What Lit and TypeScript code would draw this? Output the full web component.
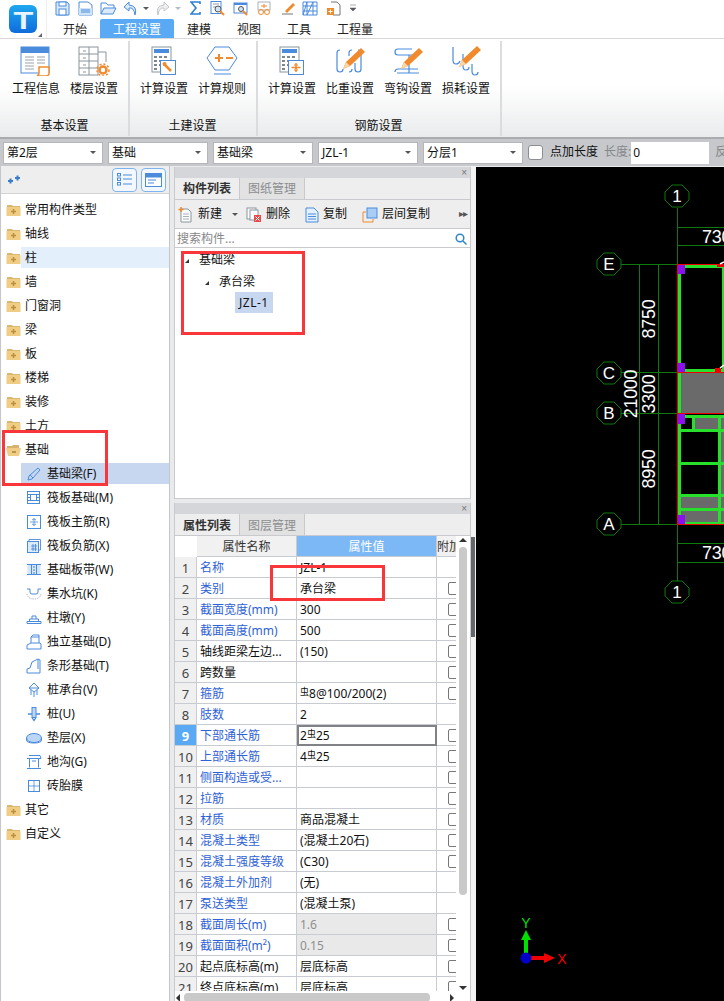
import { LitElement, html, svg, css } from 'lit';
import { customElement } from 'lit/decorators.js';

const BLUE = '#4a8bdc';
const ORANGE = '#f08a2c';

const pencil = (x = 0, y = 0) => svg`
  <g transform="translate(${x} ${y})">
    <path d="M2 24 L5 17 L20 3 L24 7 L9 21 Z" fill="${ORANGE}"/>
    <path d="M2 24 L5 17 L9 21 Z" fill="#f7d6a8"/>
  </g>`;

const calc = (inner: unknown) => html`
  <svg width="26" height="30" viewBox="0 0 26 30">
    <rect x="1" y="1" width="19" height="25" fill="#fff" stroke="#8a949e"/>
    <rect x="3" y="3" width="15" height="4" fill="${BLUE}"/>
    <path d="M3 10h3v2H3zM8 10h3v2H8zM13 10h3v2h-3zM3 14h3v2H3zM8 14h3v2H8zM3 18h3v2H3zM8 18h3v2H8zM3 22h3v2H3z" fill="#7d8791"/>
    <rect x="9.500" y="14.500" width="15" height="14" fill="#fff" stroke="${BLUE}"/>
    ${inner}
  </svg>`;

const ribbonIcons: Record<string, unknown> = {
  info: html`<svg width="32" height="30" viewBox="0 0 32 30">
    <rect x="1" y="1" width="28" height="26" fill="#fff" stroke="${BLUE}"/>
    <rect x="1" y="1" width="28" height="6" fill="${BLUE}"/>
    <path d="M5 11h9M5 14h9M5 17h9M5 20h9M5 23h9M17 11h8M17 14h8M17 17h8" stroke="#9aa3ab"/>
    <path d="M19 21h10v7q-1 2-3 2h-9q2-1 2-3z" fill="#fff" stroke="${ORANGE}" stroke-width="1.500"/>
  </svg>`,
  floor: html`<svg width="32" height="30" viewBox="0 0 32 30">
    <rect x="1" y="1" width="19" height="28" fill="#fff" stroke="#8a949e"/>
    <path d="M1 8h19M1 15h19M1 22h19M11 1v28M20 6h8v10" fill="none" stroke="#8a949e"/>
    <path d="M5 5h3M5 12h3M5 19h3M5 26h3" stroke="#8a949e"/>
    <circle cx="25" cy="24" r="3.500" fill="#fff" stroke="${ORANGE}" stroke-width="2.500"/>
    <circle cx="25" cy="24" r="6" fill="none" stroke="${ORANGE}" stroke-width="1.500" stroke-dasharray="2 2"/>
  </svg>`,
  calcWrench: calc(svg`<path d="M13 18l7 7" stroke="${ORANGE}" stroke-width="2.500"/><circle cx="13.500" cy="18" r="2" fill="${ORANGE}"/>`),
  calcCross: calc(svg`<path d="M17 17v9M12.500 21.500h9" stroke="${ORANGE}" stroke-width="1.500"/><path d="M15 19h4M15 24h4" stroke="${ORANGE}"/>`),
  rule: html`<svg width="32" height="30" viewBox="0 0 32 30">
    <path d="M9 1h14l8 11-8 12H9L1 12z" fill="#fff" stroke="${BLUE}"/>
    <path d="M9 12h8M13 8v8M20 12h7" stroke="${ORANGE}" stroke-width="2"/>
    <path d="M8 28h17" stroke="${BLUE}"/>
  </svg>`,
  density: html`<svg width="32" height="30" viewBox="0 0 32 30">
    <path d="M6 4q-3 0-3 3v16q0 3 3 3t3-3M15 26q3 0 3-3M18 4q-3 0-3 3v3M24 4q3 0 3 3v16q0 3-3 3t-3-3V17" fill="none" stroke="${BLUE}" stroke-width="1.200"/>
    ${pencil(7, -1)}
  </svg>`,
  hook: html`<svg width="32" height="30" viewBox="0 0 32 30">
    <path d="M20 3H6q-3 0-3 3t3 3M6 9h20M3 26q0-3 3-3h20M5 27h22M17 9v18" fill="none" stroke="${BLUE}" stroke-width="1.200"/>
    ${pencil(7, -1)}
  </svg>`,
  loss: html`<svg width="32" height="30" viewBox="0 0 32 30">
    <path d="M3 1v13q0 4 3 4t4-3M13 8v12q0 4 3 4t3-3M22 18v7q0 4 3 4t3-3" fill="none" stroke="${BLUE}" stroke-width="1.200"/>
    ${pencil(7, -3)}
  </svg>`,
};

const ribbonGroups = [
  { title: '基本设置', width: 130, pad: 7, items: [['工程信息', 'info'], ['楼层设置', 'floor']] },
  { title: '土建设置', width: 128, pad: 5, items: [['计算设置', 'calcWrench'], ['计算规则', 'rule']] },
  { title: '钢筋设置', width: 244, pad: 5, items: [['计算设置', 'calcCross'], ['比重设置', 'density'], ['弯钩设置', 'hook'], ['损耗设置', 'loss']] },
];

const qa = (w: number, gap: number, body: unknown) =>
  html`<svg style="margin-right:${gap}px" width="${w}" height="15" viewBox="0 0 ${w} 15">${body}</svg>`;

const quickIcons = [
  qa(15, 8, svg`<path d="M1 1h11l2 2v11H1z" fill="#dcebfa" stroke="${BLUE}"/><rect x="4" y="1" width="7" height="4" fill="#fff" stroke="${BLUE}"/><rect x="4" y="8" width="7" height="6" fill="#fff" stroke="${BLUE}"/>`),
  qa(15, 7, svg`<path d="M1 1h9l4 3v10H1z" fill="#fff" stroke="${BLUE}"/><path d="M1 7h13v7H1z" fill="#cfe3f8"/><path d="M3 9h9M3 11h9" stroke="${BLUE}"/>`),
  qa(17, 6, svg`<path d="M1 13V2h5l2 2h6v3" fill="none" stroke="${BLUE}"/><path d="M1 13l3-6h12l-3 6z" fill="#dcebfa" stroke="${BLUE}"/>`),
  qa(15, 4, svg`<path d="M6 1L1 6l5 4V7q5-1 6 7 3-9-6-10z" fill="#dcebfa" stroke="${BLUE}"/>`),
  qa(7, 6, svg`<path d="M1 6h6l-3 3z" fill="#55595e"/>`),
  qa(15, 4, svg`<path d="M9 1l5 5-5 4V7q-5-1-6 7-3-9 6-10z" fill="#f0f0f0" stroke="#c2c6ca"/>`),
  qa(7, 9, svg`<path d="M1 6h6l-3 3z" fill="#b8bcc0"/>`),
  qa(11, 9, svg`<path d="M10 3V1H1l5 6-5 6h9v-2" fill="none" stroke="#2f7fd0" stroke-width="1.600"/>`),
  qa(15, 8, svg`<rect x="1" y="0.500" width="10" height="12" fill="#fff" stroke="${BLUE}"/><path d="M3 3h6M3 6h4" stroke="#99a"/><circle cx="8" cy="8" r="3" fill="#cfe3f8" stroke="#555"/><path d="M10 10l4 4" stroke="${ORANGE}" stroke-width="2"/>`),
  qa(16, 8, svg`<rect x="1" y="2" width="13" height="10" fill="#fff" stroke="${BLUE}"/><rect x="1" y="2" width="13" height="2" fill="${BLUE}"/><circle cx="8" cy="8" r="2.500" fill="#cfe3f8" stroke="#555"/><path d="M10 10l4 4" stroke="${ORANGE}" stroke-width="2"/>`),
  qa(15, 9, svg`<rect x="1" y="1" width="12" height="8" fill="#fff" stroke="#a9b3bd"/><path d="M4 5h6M7 3v4" stroke="${ORANGE}"/><circle cx="4" cy="11" r="2.500" fill="none" stroke="${ORANGE}"/><circle cx="10" cy="11" r="2.500" fill="none" stroke="${ORANGE}"/>`),
  qa(15, 6, svg`<path d="M4 10L12 2l2 2-8 8z" fill="${ORANGE}"/><path d="M1 13h11" stroke="#777"/>`),
  qa(16, 8, svg`<path d="M1 1h14v13H1zM1 5h14M1 10h14M5 1v13M11 1v13M1 14L5 1M5 14L11 1" fill="none" stroke="${BLUE}"/>`),
  qa(15, 8, svg`<path d="M5 1h6l3 3v10H7" fill="#fff" stroke="#777"/><rect x="1" y="7" width="7" height="7" fill="${ORANGE}"/><path d="M2.500 10.500h4M4.500 8.500v4" stroke="#fff"/>`),
  qa(7, 0, svg`<path d="M1 4h6M1 7h6l-3 3z" fill="#55595e" stroke="#55595e" stroke-width="0.500"/>`),
];

const folder = (open = false) => html`<svg class="folder" width="15" height="12" viewBox="0 0 15 12">
  ${open
    ? svg`<path d="M1 2h5l1-1h6v3H1z" fill="#d8b26c"/><path d="M0 4h12l3 0-2 8H2z" fill="#f0cd85"/><path d="M6 8h4" stroke="#a9823c" stroke-width="1.500"/>`
    : svg`<path d="M1 1h5l1 1h7v2H1z" fill="#dcb772"/><rect x="0.500" y="3" width="14" height="9" fill="#f0cd85"/><path d="M5 7.500h5M7.500 5v5" stroke="#bd8f3c" stroke-width="1.500"/>`}
</svg>`;

const leaf = (body: unknown) => html`<svg width="16" height="16" viewBox="0 0 16 16" fill="none" stroke="${BLUE}">${body}</svg>`;

const leafIcons: Record<string, unknown> = {
  pen: leaf(svg`<path d="M2 14l1-4 9-8 2 2-8 9z"/><path d="M4 9l3 3"/>`),
  raft: leaf(svg`<rect x="1.500" y="1.500" width="12" height="12"/><rect x="4.500" y="4.500" width="6" height="6"/><path d="M1.500 4.500h3M1.500 7.500h3M1.500 10.500h3M10.500 4.500h3M10.500 7.500h3M10.500 10.500h3"/>`),
  raftMain: leaf(svg`<rect x="1.500" y="1.500" width="13" height="13"/><path d="M8 4v8M4 8h8M6 6q2-2 4 0M6 10q2 2 4 0" stroke-width="0.800"/>`),
  raftNeg: leaf(svg`<rect x="1.500" y="3.500" width="11" height="11" fill="#dcebfa"/><path d="M3 3V1.500h11.500V12H13M5 8h6M5 11h6M7 6v7M9.500 6v7" stroke-width="0.900"/>`),
  strip: leaf(svg`<rect x="1.500" y="2.500" width="13" height="10" fill="#d4e5f8" stroke="none"/><path d="M1 2.500h14M1 12.500h14M5.500 2.500v10M10.500 2.500v10"/><path d="M8 4v8" stroke-dasharray="2 1"/>`),
  pit: leaf(svg`<path d="M1 3h3v3q0 2 2 2h4q2 0 2-2V3h3"/><path d="M1 8q1 5 7 5t7-5" stroke="#9aa8b6" stroke-dasharray="1 1"/>`),
  pier: leaf(svg`<path d="M1 11.500h14v2H1zM3.500 11V9h9v2M6 9V6h4v3"/>`),
  iso: leaf(svg`<path d="M1 15v-4l4-2h9l1 1v5zM5 9V3l2-2h6v8M5 3h8"/>`),
  bar: leaf(svg`<path d="M1 15v-4l3-1 2-6 6-3 2 1v13zM12 1v10"/>`),
  cap: leaf(svg`<path d="M8 1l5 5-5 4-5-4zM5 8v5M8 10v5M11 8v5M3 6h10"/>`),
  pile: leaf(svg`<rect x="6" y="1.500" width="4" height="10" fill="#bcd6f5"/><path d="M2 8h4M10 8h4M6 11.500l2 3 2-3" stroke-width="1.300"/>`),
  cushion: html`<svg width="16" height="16" viewBox="0 0 16 16"><ellipse cx="8" cy="8" rx="7.500" ry="4.500" fill="#bcd6f5" stroke="${BLUE}"/><path d="M.5 8v2q0 3 7.500 3t7.500-3V8" fill="none" stroke="${BLUE}"/></svg>`,
  ditch: leaf(svg`<path d="M1 4.500h14M3 1.500h11L15 4.500M3.500 4.500v9M12.500 4.500v9M1 14.500h14M6 7h4"/>`),
  mold: leaf(svg`<rect x="2.500" y="2.500" width="11" height="11"/><path d="M8 2.500v11M2.500 8h11" stroke-width="0.800"/>`),
};

const treeBefore = ['常用构件类型', '轴线', '柱', '墙', '门窗洞', '梁', '板', '楼梯', '装修', '土方'];
const leaves = [
  ['基础梁(F)', 'pen'], ['筏板基础(M)', 'raft'], ['筏板主筋(R)', 'raftMain'], ['筏板负筋(X)', 'raftNeg'],
  ['基础板带(W)', 'strip'], ['集水坑(K)', 'pit'], ['柱墩(Y)', 'pier'], ['独立基础(D)', 'iso'],
  ['条形基础(T)', 'bar'], ['桩承台(V)', 'cap'], ['桩(U)', 'pile'], ['垫层(X)', 'cushion'],
  ['地沟(G)', 'ditch'], ['砖胎膜', 'mold'],
];

// name, value, blue name, checkbox
const rows: [string, string, boolean, boolean][] = [
  ['名称', 'JZL-1', true, false],
  ['类别', '承台梁', true, true],
  ['截面宽度(mm)', '300', true, true],
  ['截面高度(mm)', '500', true, true],
  ['轴线距梁左边...', '(150)', false, true],
  ['跨数量', '', false, true],
  ['箍筋', '~8@100/200(2)', true, true],
  ['肢数', '2', true, false],
  ['下部通长筋', '2~25', true, true],
  ['上部通长筋', '4~25', true, true],
  ['侧面构造或受...', '', true, true],
  ['拉筋', '', true, true],
  ['材质', '商品混凝土', true, true],
  ['混凝土类型', '(混凝土20石)', true, true],
  ['混凝土强度等级', '(C30)', true, true],
  ['混凝土外加剂', '(无)', true, false],
  ['泵送类型', '(混凝土泵)', true, false],
  ['截面周长(m)', '1.6', true, true],
  ['截面面积(m²)', '0.15', true, true],
  ['起点底标高(m)', '层底标高', false, true],
  ['终点底标高(m)', '层底标高', false, true],
];

const axisBubble = (cx: number, cy: number, label: string) => svg`
  <path d="M${cx - 5} ${cy - 11}h10l7 7v8l-7 7h-10l-7-7v-8z" fill="none" stroke="#0c7a0c" stroke-linejoin="round"/>
  <text x="${cx}" y="${cy + 6}" class="cad-label" text-anchor="middle">${label}</text>`;

const dimV = (x: number, y: number, label: string) => svg`
  <text transform="translate(${x} ${y}) rotate(-90)" class="cad-dim" text-anchor="middle">${label}</text>`;

@customElement('app-root')
export class AppRoot extends LitElement {
  static styles = css`
    :host {
      display: block; position: relative; width: 724px; height: 1001px; overflow: hidden;
      background: #fff; color: #111;
      font: 12px/1.2 "Noto Sans", "Noto Sans CJK SC", sans-serif;
    }
    svg { display: block; flex: none; }

    .topbar { display: flex; height: 38px; background: #fff; }
    .logo { width: 46px; padding: 5px 0 0 9px; box-sizing: border-box; position: relative; }
    .logo-mark {
      width: 28px; height: 28px; border-radius: 6px;
      background: linear-gradient(#1fa8f0, #0f6cdc);
      display: flex; align-items: center; justify-content: center;
      color: #e8f5ff; font: bold 24px/28px "Liberation Sans", sans-serif;
    }
    .logo-mark span { display: block; transform: scaleX(1.35); padding-top: 3px; }
    .grip {
      position: absolute; left: 38px; top: 33px; width: 0; height: 0;
      border-left: 4px solid transparent; border-bottom: 4px solid #666;
    }
    .head-main { flex: 1; display: flex; flex-direction: column; border-left: 1px solid #eee; }
    .quick { height: 19px; display: flex; align-items: flex-start; padding: 1px 0 0 8px; }
    .tabs { display: flex; height: 19px; padding-left: 3px; }
    .tab { padding: 0 13px; line-height: 21px; font-size: 12px; color: #222; }
    .tab.active { background: #5aa9f4; color: #fff; border-radius: 2px 2px 0 0; }

    .ribbon {
      display: flex; height: 99px; box-sizing: border-box;
      border-top: 1px solid #d8d8d8;
      background: linear-gradient(#fff 0, #fff 48%, #e9ebec 100%);
    }
    .group {
      display: flex; flex-direction: column; align-items: stretch; box-sizing: border-box;
      border-right: 2px solid #dadcde; margin: 2px 0 1px;
    }
    .group-items { display: flex; flex: 1; }
    .rb { width: 58px; display: flex; flex-direction: column; align-items: center; padding-top: 5px; }
    .rb .ic { height: 35px; }
    .rb span { line-height: 16px; white-space: nowrap; }
    .group-title { text-align: center; line-height: 18px; padding-bottom: 1px; padding-right: 6px; }

    .bar {
      display: flex; align-items: center; height: 29px; box-sizing: border-box;
      background: #c6c8cb; border-top: 2px solid #a9abae; padding-left: 3px;
    }
    .sel {
      flex: none; width: 100px; height: 22px; box-sizing: border-box; margin-right: 5px;
      background: #fff; border: 1px solid #b4b6b9; padding: 0 3px; line-height: 20px;
      display: flex; justify-content: space-between; align-items: center;
    }
    .caret { width: 0; height: 0; border: 3px solid transparent; border-top: 3px solid #555; border-bottom: 0; margin-right: 3px; flex: none; }
    .chk { width: 13px; height: 13px; border: 1px solid #8b8d90; border-radius: 3px; background: #fff; margin: 0 7px 0 0; flex: none; }
    .muted { color: #85878a; white-space: nowrap; }
    .len { width: 78px; height: 22px; background: #fff; box-sizing: border-box; padding-left: 2px; line-height: 22px; margin: 0 6px 0 0; flex: none; }
    .bar-label { margin-right: 6px; white-space: nowrap; }

    .main { display: flex; height: 836px; background: #e9eaec; }
    .side { width: 170px; flex: none; background: #fff; border-left: 1px solid #c4c6c9; border-right: 1px solid #c4c6c9; box-sizing: border-box; }
    .side-head { height: 28px; background: #eeeeee; border-bottom: 1px solid #d4d4d4; display: flex; align-items: center; padding: 0 3px 0 7px; gap: 4px; box-sizing: border-box; }
    .side-btn { width: 25px; height: 24px; border: 1px solid #7db4ee; border-radius: 4px; background: #f3f8fe; box-sizing: border-box; display: flex; align-items: center; justify-content: center; }
    .spacer { flex: 1; }
    .tree { padding-top: 4px; }
    .node { display: flex; align-items: center; height: 24px; padding-left: 5px; position: relative; }
    .node .name { margin-left: 4px; }
    .node.hl::before, .node.sel-row::before {
      content: ''; position: absolute; left: 20px; right: 0; top: 1px; bottom: 2px; z-index: 0;
    }
    .node.hl::before { background: #e3f0fc; }
    .node.sel-row::before { background: #c7d7ef; }
    .node > * { position: relative; }
    .node.leaf { padding-left: 25px; }
    .node.leaf .name { margin-left: 5px; }

    .mid { width: 297px; flex: none; margin-left: 4px; display: flex; flex-direction: column; gap: 4px; padding-top: 1px; box-sizing: border-box; }
    .panel { background: #fff; display: flex; flex-direction: column; position: relative; overflow: hidden; border-right: 1px solid #c8cacd; border-left: 1px solid #c8cacd; }
    .panel.top { height: 332px; flex: none; border-bottom: 1px solid #c8cacd; box-sizing: border-box; }
    .panel.bottom { flex: 1; }
    .cap { height: 11px; background: #d4d6da; flex: none; text-align: right; padding-right: 3px; font: 10px/11px "Liberation Sans", sans-serif; color: #777; }
    .ptabs { display: flex; height: 22px; background: #eeeeee; border-bottom: 1px solid #c8cacd; flex: none; box-sizing: border-box; }
    .ptab { width: 65px; text-align: center; line-height: 21px; font-weight: 700; color: #333; border-right: 1px solid #c8cacd; box-sizing: border-box; }
    .ptab.off { background: #e2e2e2; color: #8b8d90; font-weight: 400; }
    .panel.bottom .ptab { line-height: 24px; }
    .tools { display: flex; align-items: center; height: 29px; background: #eeeeee; border-bottom: 1px solid #c8cacd; padding: 1px 0 0 3px; box-sizing: border-box; flex: none; position: relative; }
    .tool { display: flex; align-items: center; gap: 4px; margin-right: 15px; }
    .tool.new { gap: 5px; margin-right: 8px; }
    .more { position: absolute; right: 0; top: 8px; font: 10px/12px "Liberation Sans", sans-serif; color: #555; letter-spacing: -1px; padding-right: 3px; }
    .search { height: 19px; display: flex; justify-content: space-between; align-items: center; border-bottom: 1px solid #c8cacd; padding: 2px 3px 0 2px; color: #888; flex: none; box-sizing: border-box; }
    .ctree { padding-top: 2px; flex: 1; }
    .cnode { display: flex; align-items: center; height: 21px; }
    .tri { width: 0; height: 0; border-left: 4px solid transparent; border-bottom: 4px solid #333; margin: 0 10px 0 10px; }
    .cnode.l2 { padding-left: 20px; margin-top: 1px; }
    .cnode.l3 { padding-left: 60px; margin-top: -1px; }
    .cnode.l3 span { background: #c7d7ef; padding: 0 4px; line-height: 21px; letter-spacing: .5px; }

    .grid {
      display: grid; grid-template-columns: 22px 100px 140px 20px;
      grid-auto-rows: 21px; overflow: hidden; width: 282px; flex: none;
      height: 455px;
    }
    .cell { border-right: 1px solid #c8ccd2; border-bottom: 1px solid #c8ccd2; padding: 0 3px; line-height: 22px; white-space: nowrap; overflow: hidden; box-sizing: border-box; }
    .cell.num { background: #f0f0f0; color: #444; padding: 0; text-align: center; font-size: 13px; }
    .cell.num.cur { background: #5aa9f4; color: #fff; font-weight: 700; }
    .cell.name.blue { color: #2f62d6; }
    .cell.head { background: #f1f1f1; text-align: center; color: #333; padding: 0; }
    .cell.head.cur { background: #7cb7f6; color: #fff; }
    .cell.head.blank { background: #fff; border-right: 0; border-bottom: 0; }
    .cell.val.ro { background: #e9e9e9; color: #8f8f8f; }
    .cell.val.edit { outline: 2px solid #808285; outline-offset: -2px; }
    .cell.check { padding: 4px 0 0 11px; border-right: 0; overflow: hidden; }
    .cell.check i { display: block; width: 13px; height: 13px; border: 1px solid #777; border-radius: 2px; box-sizing: border-box; }
    .bar-sym { font-size: 9px; position: relative; top: -3px; }

    .sb-v { position: absolute; right: 0; top: 33px; bottom: 0; width: 14px; background: #fff; }
    .sb-v .thumb { position: absolute; left: 3px; top: 11px; width: 8px; height: 348px; background: #c9c9c9; border-radius: 4px; }
    .ar-up, .ar-dn { position: absolute; left: 3px; width: 0; height: 0; border: 4px solid transparent; }
    .ar-up { top: 0; border-bottom: 4px solid #333; border-top: 0; margin-top: 2px; }
    .ar-dn { bottom: 12px; border-top: 4px solid #333; border-bottom: 0; }
    .sb-h { position: absolute; left: 0; right: 14px; bottom: 0; height: 9px; background: #fff; }
    .sb-h .thumb { position: absolute; left: 9px; width: 246px; top: 0; height: 9px; background: #c9c9c9; border-radius: 4px; }
    .ar-l, .ar-r { position: absolute; top: 1px; width: 0; height: 0; border: 4px solid transparent; }
    .ar-l { left: 1px; border-right: 4px solid #333; border-left: 0; }
    .ar-r { right: 2px; border-left: 4px solid #333; border-right: 0; }

    .gutter { flex: none; width: 5px; background: #f2f2f2; position: relative; }
    .gutter .handle { position: absolute; left: 0; right: 1px; top: 371px; height: 100px; background: #63676b; }

    .cad { flex: 1; background: #000; overflow: hidden; margin-top: 1px; }
    .cad-label { fill: #fff; font: 17px "Liberation Sans", sans-serif; }
    .cad-dim { fill: #fff; font: 18px "Liberation Sans", sans-serif; letter-spacing: -.3px; }
    .cad-axis { font: 14px "Liberation Sans", sans-serif; }

    .note { position: absolute; border: 3px solid #f9363a; box-sizing: border-box; pointer-events: none; }
    .note.a { left: 2px; top: 430px; width: 106px; height: 56px; }
    .note.b { left: 181px; top: 251px; width: 124px; height: 84px; }
    .note.c { left: 270px; top: 565px; width: 115px; height: 36px; }
  `;

  private renderValue(v: string) {
    if (!v.includes('~')) return v;
    const [a, b] = v.split('~');
    return html`${a}<span class="bar-sym">虫</span>${b}`;
  }

  private renderHead() {
    return html`
      <div class="topbar">
        <div class="logo"><div class="logo-mark"><span>T</span></div><div class="grip"></div></div>
        <div class="head-main">
          <div class="quick">${quickIcons}</div>
          <div class="tabs">
            <div class="tab">开始</div>
            <div class="tab active">工程设置</div>
            <div class="tab">建模</div>
            <div class="tab">视图</div>
            <div class="tab">工具</div>
            <div class="tab">工程量</div>
          </div>
        </div>
      </div>
      <div class="ribbon">
        ${ribbonGroups.map((g) => html`
          <div class="group" style="width:${g.width}px;padding-left:${g.pad}px">
            <div class="group-items">
              ${g.items.map(([label, ic]) => html`
                <div class="rb"><div class="ic">${ribbonIcons[ic]}</div><span>${label}</span></div>`)}
            </div>
            <div class="group-title">${g.title}</div>
          </div>`)}
      </div>
      <div class="bar">
        ${['第2层', '基础', '基础梁', 'JZL-1', '分层1'].map((s) => html`
          <div class="sel"><span>${s}</span><div class="caret"></div></div>`)}
        <div class="chk"></div>
        <span class="bar-label">点加长度</span>
        <span class="muted">长度:</span>
        <div class="len">0</div>
        <span class="muted">反</span>
      </div>`;
  }

  private renderSide() {
    return html`
      <div class="side">
        <div class="side-head">
          <svg width="12" height="10" viewBox="0 0 12 10"><path d="M0 6h5M2.500 3.500v5M7 3h5M9.500 .5v5" stroke="#3d7cc9" stroke-width="2"/></svg>
          <div class="spacer"></div>
          <div class="side-btn"><svg width="15" height="13" viewBox="0 0 15 13" fill="none" stroke="${BLUE}"><rect x=".5" y=".5" width="3" height="2.500"/><rect x=".5" y="5" width="3" height="2.500"/><rect x=".5" y="9.500" width="3" height="2.500"/><path d="M6 2h9M6 6h9M6 11h9"/></svg></div>
          <div class="side-btn"><svg width="17" height="14" viewBox="0 0 17 14"><rect x=".5" y=".5" width="16" height="13" fill="#fff" stroke="${BLUE}"/><rect x=".5" y=".5" width="16" height="4" fill="${BLUE}"/><path d="M3 7h8M3 10h6" stroke="${BLUE}"/></svg></div>
        </div>
        <div class="tree">
          ${treeBefore.map((t) => html`
            <div class="node ${t === '柱' ? 'hl' : ''}">${folder()}<span class="name">${t}</span></div>`)}
          <div class="node">${folder(true)}<span class="name">基础</span></div>
          ${leaves.map(([t, ic], i) => html`
            <div class="node leaf ${i === 0 ? 'sel-row' : ''}">${leafIcons[ic]}<span class="name">${t}</span></div>`)}
          <div class="node">${folder()}<span class="name">其它</span></div>
          <div class="node">${folder()}<span class="name">自定义</span></div>
        </div>
      </div>`;
  }

  private renderComponents() {
    return html`
      <div class="panel top">
        <div class="cap">×</div>
        <div class="ptabs"><div class="ptab">构件列表</div><div class="ptab off">图纸管理</div></div>
        <div class="tools">
          <div class="tool new">
            <svg width="15" height="16" viewBox="0 0 15 16"><path d="M3 2h7l3 3v10H3z" fill="#fff" stroke="#8a949e"/><path d="M5 7h6M5 9.500h6M5 12h6" stroke="#a8b0b8"/><path d="M3 0v5M.5 2.500h5" stroke="${ORANGE}" stroke-width="1.500"/></svg>
            <span>新建</span><div class="caret" style="margin:0 0 0 5px"></div>
          </div>
          <div class="tool">
            <svg width="16" height="16" viewBox="0 0 16 16"><rect x="1" y="1" width="9" height="11" fill="#fff" stroke="#8a949e"/><rect x="4" y="3" width="8" height="10" fill="#fff" stroke="#8a949e"/><rect x="8" y="8" width="7" height="7" fill="#e64a4a"/><path d="M9.500 9.500l4 4M13.500 9.500l-4 4" stroke="#fff"/></svg>
            <span>删除</span>
          </div>
          <div class="tool">
            <svg width="14" height="16" viewBox="0 0 14 16"><path d="M1 1h8l4 4v10H1z" fill="#e4f0fc" stroke="${BLUE}"/><path d="M3 7h8M3 9.500h8M3 12h8" stroke="${BLUE}"/></svg>
            <span>复制</span>
          </div>
          <div class="tool">
            <svg width="16" height="16" viewBox="0 0 16 16"><path d="M1 15V5h3M1 15h10v-3" fill="none" stroke="${ORANGE}"/><rect x="5" y="1" width="10" height="10" fill="#a9cdf5" stroke="${BLUE}"/></svg>
            <span>层间复制</span>
          </div>
          <div class="more">▸▸</div>
        </div>
        <div class="search">
          <span>搜索构件...</span>
          <svg width="12" height="12" viewBox="0 0 12 12" fill="none" stroke="#2f86c9" stroke-width="1.500"><circle cx="5" cy="5" r="3.800"/><path d="M8 8l3.500 3.500"/></svg>
        </div>
        <div class="ctree">
          <div class="cnode l1"><div class="tri"></div><span>基础梁</span></div>
          <div class="cnode l2"><div class="tri"></div><span>承台梁</span></div>
          <div class="cnode l3"><span>JZL-1</span></div>
        </div>
      </div>`;
  }

  private renderProps() {
    return html`
      <div class="panel bottom">
        <div class="cap">×</div>
        <div class="ptabs"><div class="ptab">属性列表</div><div class="ptab off">图层管理</div></div>
        <div class="grid">
          <div class="cell head blank"></div>
          <div class="cell head">属性名称</div>
          <div class="cell head cur">属性值</div>
          <div class="cell head">附加</div>
          ${rows.map(([name, val, blue, check], i) => html`
            <div class="cell num ${i === 8 ? 'cur' : ''}">${i + 1}</div>
            <div class="cell name ${blue ? 'blue' : ''}">${name}</div>
            <div class="cell val ${i === 17 || i === 18 ? 'ro' : ''} ${i === 8 ? 'edit' : ''}">${this.renderValue(val)}</div>
            <div class="cell check">${check ? html`<i></i>` : ''}</div>`)}
        </div>
        <div class="sb-v"><div class="ar-up"></div><div class="thumb"></div><div class="ar-dn"></div></div>
        <div class="sb-h"><div class="ar-l"></div><div class="thumb"></div><div class="ar-r"></div></div>
      </div>`;
  }

  private renderCad() {
    // coordinates are page pixels, the view box starts at the canvas corner
    const g = '#0c7a0c';
    const hot = '#26e02c';
    const grey = '#6a6a6a';
    const purple = '#8a10f0';
    return html`
      <div class="cad">
        <svg width="248" height="835" viewBox="476 166 248 835">
          <g stroke="${g}" fill="none">
            <path d="M677.500 207V263M677.500 523V580"/>
            <path d="M677 226.500H724M677 244.500H724M677 542.500H724M677 561.500H724"/>
            <path d="M621 263.500H680M621 371.500H680M621 412.500H680M621 523.500H680"/>
            <path d="M639.500 263V524M658.500 263V524"/>
          </g>
          ${axisBubble(677, 195, '1')}
          ${axisBubble(677, 591, '1')}
          ${axisBubble(609, 263, 'E')}
          ${axisBubble(609, 372, 'C')}
          ${axisBubble(609, 412, 'B')}
          ${axisBubble(609, 523, 'A')}
          <text x="702" y="242" class="cad-dim">7300</text>
          <text x="702" y="558" class="cad-dim">7300</text>
          ${dimV(655, 318, '8750')}
          ${dimV(655, 393, '3300')}
          ${dimV(655, 468, '8950')}
          ${dimV(637, 393, '21000')}

          <rect x="681" y="372" width="43" height="40" fill="${grey}"/>
          <rect x="695" y="417" width="23" height="11" fill="${grey}"/>
          <rect x="681" y="496" width="37" height="11" fill="${grey}"/>
          <rect x="681" y="510" width="37" height="11" fill="${grey}"/>
          <rect x="721" y="417" width="3" height="105" fill="${grey}"/>
          <g fill="${hot}">
            <rect x="678" y="264" width="46" height="3"/>
            <rect x="678" y="368" width="46" height="3"/>
            <rect x="678" y="264" width="3" height="259"/>
            <rect x="722" y="264" width="2" height="104"/>
            <rect x="678" y="414" width="46" height="3"/>
            <rect x="678" y="428" width="46" height="3"/>
            <rect x="692" y="414" width="3" height="15"/>
            <rect x="718" y="414" width="3" height="109"/>
            <rect x="678" y="461" width="46" height="3"/>
            <rect x="678" y="493" width="46" height="3"/>
            <rect x="678" y="507" width="46" height="3"/>
            <rect x="678" y="521" width="46" height="2"/>
          </g>
          <g fill="#f00000">
            <rect x="677" y="263" width="1" height="261"/>
            <rect x="677" y="263" width="47" height="1"/>
            <rect x="677" y="371" width="47" height="1"/>
            <rect x="677" y="412" width="47" height="1"/>
            <rect x="677" y="523" width="47" height="1"/>
            <rect x="717" y="263" width="7" height="3"/>
            <rect x="715" y="367" width="6" height="4"/>
          </g>
          <path d="M720 263l4-2M720 367l4-3" stroke="#fff" stroke-width="1.500"/>
          <g fill="${purple}">
            <rect x="678" y="264" width="7" height="9"/>
            <rect x="678" y="362" width="7" height="9"/>
            <rect x="678" y="413" width="7" height="10"/>
            <rect x="678" y="514" width="7" height="9"/>
          </g>

          <path d="M526 957V938" stroke="#00e000" stroke-width="4"/>
          <path d="M526 929l5 10h-10z" fill="#00e000"/>
          <path d="M530 957H545" stroke="#f00000" stroke-width="4"/>
          <path d="M555 957l-11-5v10z" fill="#f00000"/>
          <circle cx="526" cy="957" r="5.500" fill="#0000c8"/>
          <text x="526" y="927" class="cad-axis" fill="#00e000" text-anchor="middle">Y</text>
          <text x="562" y="963" class="cad-axis" fill="#f00000" text-anchor="middle">X</text>
        </svg>
      </div>`;
  }

  render() {
    return html`
      ${this.renderHead()}
      <div class="main">
        ${this.renderSide()}
        <div class="mid">${this.renderComponents()}${this.renderProps()}</div>
        <div class="gutter"><div class="handle"></div></div>
        ${this.renderCad()}
      </div>
      <div class="note a"></div>
      <div class="note b"></div>
      <div class="note c"></div>`;
  }
}
